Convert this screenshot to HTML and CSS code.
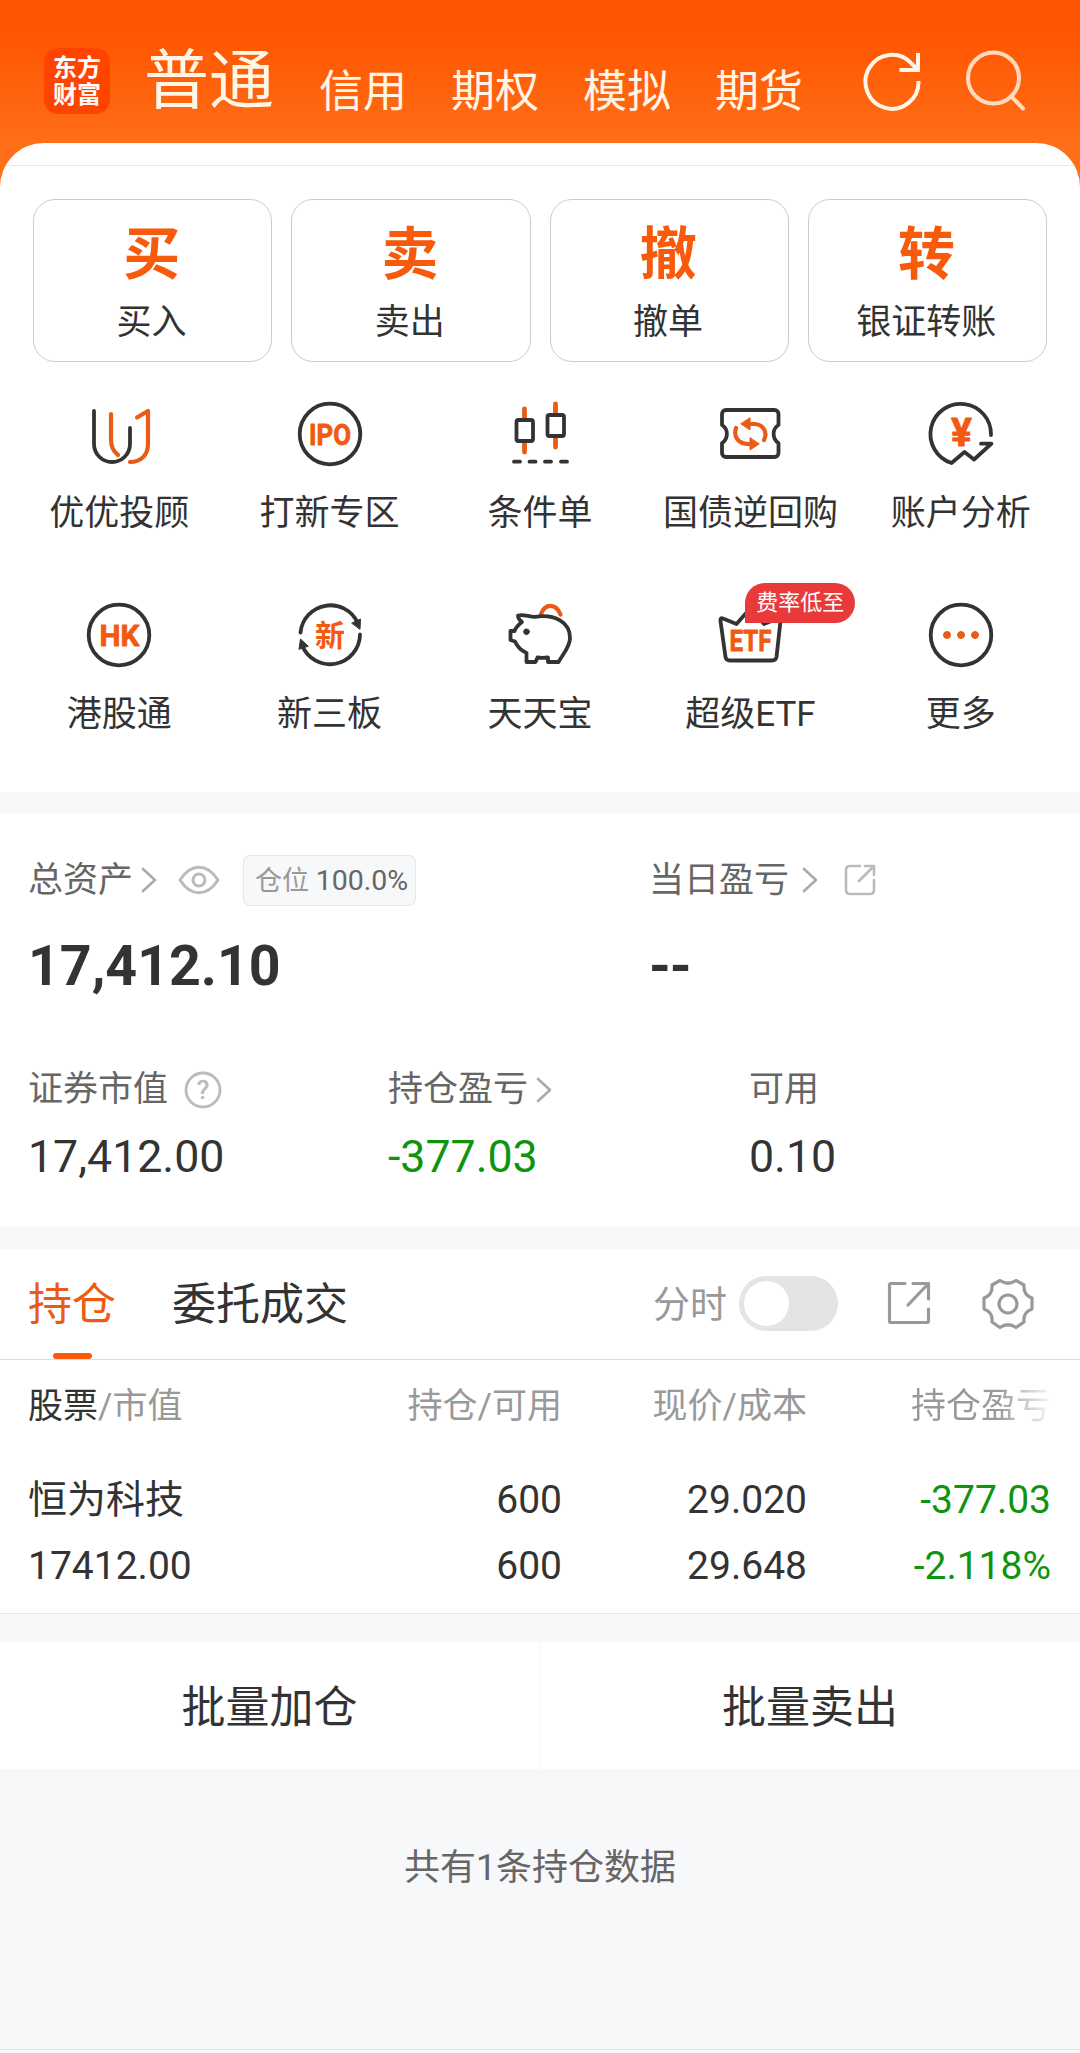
FILE: index.html
```html
<!DOCTYPE html>
<html lang="zh-Hans">
  <head>
    <meta charset="UTF-8" />
    <meta name="viewport" content="width=device-width, initial-scale=1.0" />
    <title>交易 - 普通</title>
    <link rel="stylesheet" href="styles.css">
  </head>
  <body>
    <header class="header">
      <div class="logo"><span>东方</span><span>财富</span></div>
      <nav class="nav">
        <span class="nav-active">普通</span>
        <span>信用</span>
        <span>期权</span>
        <span>模拟</span>
        <span>期货</span>
      </nav>
      <svg class="refresh" width="62" height="62" viewBox="0 0 62 62">
        <path d="M57.500 31A26.500 27 0 1 1 50.500 13.500L57 20" />
        <path d="M38.500 20H57V3" />
      </svg>
      <svg class="search" width="62" height="62" viewBox="0 0 62 62">
        <circle cx="28.500" cy="28" r="25.500" />
        <path d="M46 46L58 58.500" />
      </svg>
    </header>

    <main class="panel">
      <section class="trade">
        <div class="card"><b>买</b><span>买入</span></div>
        <div class="card"><b>卖</b><span>卖出</span></div>
        <div class="card"><b>撤</b><span>撤单</span></div>
        <div class="card"><b>转</b><span>银证转账</span></div>
      </section>

      <section class="menu">
        <div class="item">
          <svg class="icon" viewBox="0 0 64 64">
            <path d="M7 9V42a18 18 0 0 0 36 0V26" />
            <path class="orange" d="M24 12V38c0 7 2 11 7 15M50 15.500L61 9V42c0 11-7 18-18 18" />
          </svg>
          <span>优优投顾</span>
        </div>
        <div class="item">
          <svg class="icon" viewBox="0 0 64 64">
            <circle cx="32" cy="32" r="30.300" />
            <text x="32" y="42.500" textLength="42" lengthAdjust="spacingAndGlyphs">IPO</text>
          </svg>
          <span>打新专区</span>
        </div>
        <div class="item">
          <svg class="icon" viewBox="0 0 64 64">
            <path class="orange candle" d="M16.500 7V16M16.500 41V50M47.500 2V11M47.500 36V45" />
            <rect x="8.500" y="18" width="16.500" height="21" rx="2" />
            <rect x="39.500" y="13" width="16.500" height="21" rx="2" />
            <path d="M6 59.700h6M21.500 59.700h6M37 59.700h6M53 59.700h6" />
          </svg>
          <span>条件单</span>
        </div>
        <div class="item">
          <svg class="icon" viewBox="0 0 64 64">
            <path d="M8 8h48.500a4 4 0 0 1 4 4v11c-6.500 4-6.500 14 0 18v10a4 4 0 0 1-4 4H8a4 4 0 0 1-4-4V41c6.500-4 6.500-14 0-18V12a4 4 0 0 1 4-4z" />
            <path class="orange" d="M18 26C15 35 21 42 30 42H33M32 22H36C45 22 50 30 46 38" />
            <path class="orange-fill" d="M32 16V28L23 22ZM32 36V48L41 42Z" />
          </svg>
          <span>国债逆回购</span>
        </div>
        <div class="item">
          <svg class="icon" viewBox="0 0 64 64">
            <path d="M62 33A30.300 30.300 0 1 0 22.500 61L35.500 50L45 57.500L62.500 41.700H52" />
            <text x="32.500" y="43.500" class="yen">¥</text>
          </svg>
          <span>账户分析</span>
        </div>
        <div class="item">
          <svg class="icon" viewBox="0 0 64 64">
            <circle cx="32" cy="32" r="30.300" />
            <text x="32.500" y="42.500" textLength="40" lengthAdjust="spacingAndGlyphs">HK</text>
          </svg>
          <span>港股通</span>
        </div>
        <div class="item">
          <svg class="icon" viewBox="0 0 64 64">
            <path d="M2.500 29.500A30 30 0 0 1 59.500 19.500M62 31.500A30 30 0 0 1 4 42" />
            <path class="dark-fill" d="M54 20L62.500 16L62 26ZM1 46L2.500 36L10 43Z" />
            <text x="32" y="42.500" class="xin">新</text>
          </svg>
          <span>新三板</span>
        </div>
        <div class="item">
          <svg class="icon" viewBox="0 0 64 64">
            <path class="orange" d="M33 11C37 0 48 0 52.500 11.500" />
            <path d="M10 12.500C16 11 21 14 27 13.800C47 11 62 19 62 35C62 44 55 51 50.500 59H40V54.500C35 55 33 55 29.500 54.500L27.500 59H18.500V50C12 47 9 43 7 38.500L2.500 37V28H6.500C8 24 10 22 14 19Q10 16 10 12.500Z" />
            <circle class="dark-fill" cx="18.500" cy="28.700" r="2.800" />
          </svg>
          <span>天天宝</span>
        </div>
        <div class="item">
          <svg class="icon" viewBox="0 0 64 64">
            <path d="M5 15.500L18.500 21L32.500 5L46 21L60 15.500Q63 14.500 62.500 18L58.500 54Q58 57.500 54 57.500H12Q8 57.500 7.500 54L2.500 18Q2 14.500 5 15.500Z" />
            <text x="32.500" y="47.500" textLength="42" lengthAdjust="spacingAndGlyphs">ETF</text>
          </svg>
          <em class="badge">费率低至</em>
          <span>超级ETF</span>
        </div>
        <div class="item">
          <svg class="icon" viewBox="0 0 64 64">
            <circle cx="32" cy="32" r="30.300" />
            <path class="orange-fill" d="M14.500 32a3.500 3.500 0 1 0 7 0a3.500 3.500 0 1 0-7 0M28.500 32a3.500 3.500 0 1 0 7 0a3.500 3.500 0 1 0-7 0M42.500 32a3.500 3.500 0 1 0 7 0a3.500 3.500 0 1 0-7 0" />
          </svg>
          <span>更多</span>
        </div>
      </section>
    </main>

    <section class="assets">
      <div class="total">
        <div>
          <div class="label">
            总资产
            <svg class="arrow" width="16" height="26" viewBox="0 0 16 26"><path d="M2 2L14 13L2 24" /></svg>
            <svg class="eye" width="42" height="30" viewBox="0 0 42 30">
              <path d="M2 15C13-2 29-2 40 15C29 32 13 32 2 15Z" />
              <circle cx="21" cy="15" r="6" />
            </svg>
            <span class="tag">仓位 <i>100.0%</i></span>
          </div>
          <div class="amount">17,412.10</div>
        </div>
        <div>
          <div class="label">
            当日盈亏
            <svg class="arrow today" width="16" height="26" viewBox="0 0 16 26"><path d="M2 2L14 13L2 24" /></svg>
            <svg class="share-sm" width="34" height="34" viewBox="0 0 34 34">
              <path d="M17 3H7Q3 3 3 7V27Q3 31 7 31H27Q31 31 31 27V17M22 3H31V12M31 3L16 18" />
            </svg>
          </div>
          <div class="amount dash">--</div>
        </div>
      </div>
      <div class="detail">
        <div>
          <div class="label">
            证券市值
            <svg class="help" width="38" height="38" viewBox="0 0 38 38">
              <circle cx="19" cy="19" r="17" />
              <text x="19" y="28">?</text>
            </svg>
          </div>
          <div class="value">17,412.00</div>
        </div>
        <div>
          <div class="label">
            持仓盈亏
            <svg class="arrow" width="16" height="26" viewBox="0 0 16 26"><path d="M2 2L14 13L2 24" /></svg>
          </div>
          <div class="value green">-377.03</div>
        </div>
        <div>
          <div class="label">可用</div>
          <div class="value">0.10</div>
        </div>
      </div>
    </section>

    <section class="holdings">
      <div class="tabs">
        <span class="tab tab-active">持仓</span>
        <span class="tab">委托成交</span>
        <span class="minute">分时</span>
        <span class="toggle"></span>
        <svg class="share" width="44" height="44" viewBox="0 0 44 44">
          <path d="M18 2.500H4Q2.500 2.500 2.500 4V40Q2.500 41.500 4 41.500H40Q41.500 41.500 41.500 40V28M26 2.500H41.500V18M41.500 2.500L21 24" />
        </svg>
        <svg class="gear" width="52" height="52" viewBox="0 0 52 52">
          <path d="M18 2.500Q26 8 34 2.500L42 7Q41 17 50 20V31Q41 34 42 44L34 49.500Q26 44 18 49.500L10 44Q11 34 2 31V20Q11 17 10 7Z" />
          <circle cx="26" cy="26" r="9" />
        </svg>
      </div>
      <div class="row head">
        <span><strong>股票</strong>/市值</span>
        <span>持仓/可用</span>
        <span>现价/成本</span>
        <span class="fade">持仓盈亏</span>
      </div>
      <div class="row">
        <span>恒为科技</span>
        <span>600</span>
        <span>29.020</span>
        <span class="green">-377.03</span>
      </div>
      <div class="row last">
        <span>17412.00</span>
        <span>600</span>
        <span>29.648</span>
        <span class="green">-2.118%</span>
      </div>
    </section>

    <section class="batch">
      <span>批量加仓</span>
      <span>批量卖出</span>
    </section>

    <footer class="footer">共有1条持仓数据</footer>
  </body>
</html>
```
FILE: styles.css
```css
* {
  box-sizing: border-box;
}

body {
  width: 1080px;
  height: 2053px;
  margin: 0;
  overflow: hidden;
  display: flex;
  flex-direction: column;
  font-family: Roboto, "Noto Sans CJK SC", sans-serif;
  font-size: 35px;
  line-height: 1;
  color: #333;
  background: linear-gradient(#ff5500 30px, #ff6e18 143px, #ff6e18 300px, #f7f8fa 300px);
}

svg {
  flex: none;
  fill: none;
  stroke-linecap: round;
  stroke-linejoin: round;
}

i,
em {
  font-style: normal;
}

/* header */
.header {
  height: 143px;
  flex: none;
  display: flex;
  align-items: flex-start;
  padding-left: 44px;
  color: #fff6e6;
}

.logo {
  width: 66px;
  height: 66px;
  margin-top: 48px;
  padding-top: 7px;
  display: flex;
  flex-direction: column;
  align-items: center;
  border-radius: 14px;
  background: #ff4400;
  color: #fff;
  font-size: 24px;
  font-weight: 700;
  line-height: 27px;
}

.nav {
  display: flex;
  align-items: flex-end;
  gap: 44px;
  margin: 49px 0 0 34px;
  font-size: 44px;
}

.nav-active {
  margin-right: 1px;
  font-size: 65px;
}

.refresh {
  margin: 50px 0 0 58px;
  stroke: #fff6e6;
  stroke-width: 4;
  stroke-linecap: butt;
  stroke-linejoin: miter;
}

.search {
  margin: 50px 0 0 42px;
  stroke: #ffd9bd;
  stroke-width: 4;
}

/* white panel */
.panel {
  height: 649px;
  flex: none;
  background: #fff;
  border-radius: 44px 44px 0 0;
  overflow: hidden;
}

.trade {
  display: grid;
  grid-template-columns: repeat(4, 1fr);
  gap: 19px;
  margin-top: 22px;
  padding: 33px 33px 0 33px;
  border-top: 1px solid #e8e8e8;
}

.card {
  height: 163px;
  display: flex;
  flex-direction: column;
  align-items: center;
  padding: 26px 2px 0 0;
  border: 1px solid #ccc;
  border-radius: 22px;
}

.card b {
  margin-bottom: 22px;
  font-size: 57px;
  color: #f85a0c;
}

.menu {
  display: grid;
  grid-template-columns: repeat(5, 1fr);
  margin: 40px 14px 0 14px;
}

.item {
  position: relative;
  height: 201px;
  display: flex;
  flex-direction: column;
  align-items: center;
}

.icon {
  width: 64px;
  height: 64px;
  margin-bottom: 30px;
  overflow: visible;
  stroke: #333;
  stroke-width: 3.8;
}

.icon .orange {
  stroke: #ea5b16;
  stroke-width: 4.2;
}

.icon .candle {
  stroke-width: 4.8;
}

.icon .orange-fill {
  fill: #ea5b16;
  stroke: #ea5b16;
  stroke-width: 1;
}

.icon .dark-fill {
  fill: #333;
  stroke-width: 1;
}

.icon text {
  fill: #f25a12;
  stroke: #f25a12;
  stroke-width: 0.8;
  font-size: 30px;
  font-weight: 700;
  text-anchor: middle;
}

.icon .yen {
  font-size: 39px;
}

.icon .xin {
  font-size: 30px;
  stroke: none;
}

.badge {
  position: absolute;
  top: -20px;
  left: 100px;
  width: 110px;
  height: 40px;
  border-radius: 20px 20px 20px 0;
  background: #e93a3b;
  color: #fff;
  font-size: 22px;
  line-height: 40px;
  text-align: center;
}

/* assets */
.assets {
  height: 413px;
  flex: none;
  margin-top: 22px;
  background: #fff;
}

.total {
  display: grid;
  grid-template-columns: 621px 1fr;
  padding: 40px 0 0 28px;
}

.label {
  height: 52px;
  display: flex;
  align-items: center;
  color: #666;
}

.arrow {
  margin-left: 8px;
  stroke: #aaa;
  stroke-width: 2.6;
}

.arrow.today {
  margin-left: 13px;
}

.eye {
  margin-left: 21px;
  stroke: #bbb;
  stroke-width: 3;
}

.tag {
  height: 51px;
  margin-left: 23px;
  padding: 0 7px 0 11px;
  border: 1px solid #e6e6e6;
  border-radius: 7px;
  background: #f7f8fa;
  color: #999;
  font-size: 27px;
  line-height: 50px;
}

.tag i {
  color: #666;
  font-size: 28.5px;
}

.share-sm {
  margin-left: 25px;
  stroke: #bbb;
  stroke-width: 2.6;
}

.amount {
  margin-top: 33px;
  font-size: 55.5px;
  font-weight: 700;
}

.dash {
  letter-spacing: -1px;
}

.detail {
  display: grid;
  grid-template-columns: 359px 361px 1fr;
  padding: 69px 0 0 29px;
}

.detail > div:first-child {
  margin-left: -1px;
}

.help {
  margin-left: 16px;
  stroke: #bbb;
  stroke-width: 2.8;
}

.help text {
  fill: #bbb;
  stroke: #bbb;
  stroke-width: 0.6;
  font-size: 26px;
  text-anchor: middle;
}

.value {
  margin-top: 19px;
  font-size: 44.7px;
}

.green {
  color: #10940f;
}

/* holdings */
.holdings {
  height: 365px;
  flex: none;
  margin-top: 22px;
  background: #fff;
  border-bottom: 1px solid #e6e9e9;
}

.tabs {
  height: 111px;
  display: flex;
  align-items: center;
  padding-left: 28px;
  border-bottom: 1px solid #ddd;
  font-size: 44px;
}

.tab {
  position: relative;
  top: 1px;
  margin-right: 56px;
}

.tab-active {
  color: #ea5b16;
}

.tab-active::after {
  content: "";
  position: absolute;
  left: 25px;
  bottom: -32px;
  width: 39px;
  height: 6px;
  border-radius: 3px;
  background: #f85a0c;
}

.minute {
  margin: 2px 0 0 249px;
  color: #999;
  font-size: 37px;
}

.toggle {
  width: 99px;
  height: 55px;
  margin: -2px 0 0 12px;
  padding: 5px;
  border-radius: 28px;
  background: #e4e4e6;
}

.toggle::before {
  content: "";
  display: block;
  width: 45px;
  height: 45px;
  border-radius: 50%;
  background: #fff;
}

.share {
  margin: -2px 0 0 49px;
  stroke: #999;
  stroke-width: 3.2;
}

.gear {
  margin: -1px 0 0 51px;
  stroke: #999;
  stroke-width: 3.2;
}

.row {
  display: grid;
  grid-template-columns: 300px 234px 245px 244px;
  padding-left: 28px;
  font-size: 39px;
  line-height: 66px;
}

.row span + span {
  text-align: right;
}

.head {
  height: 107px;
  color: #999;
  font-size: 35px;
  line-height: 94px;
}

.head strong {
  color: #333;
  font-weight: 400;
}

.head .fade {
  color: transparent;
  background: linear-gradient(90deg, #999 78%, #eee 98%);
  background-clip: text;
  -webkit-background-clip: text;
}

/* batch buttons */
.batch {
  height: 127px;
  flex: none;
  display: grid;
  grid-template-columns: 539px 1fr;
  margin-top: 28px;
  background: #fff;
  font-size: 44px;
  line-height: 132px;
  text-align: center;
}

.batch span + span {
  border-left: 1px solid #f5f5f5;
}

.footer {
  height: 281px;
  flex: none;
  padding-top: 81px;
  border-bottom: 1px solid #e3e5e7;
  color: #666;
  font-size: 36px;
  text-align: center;
}
```
